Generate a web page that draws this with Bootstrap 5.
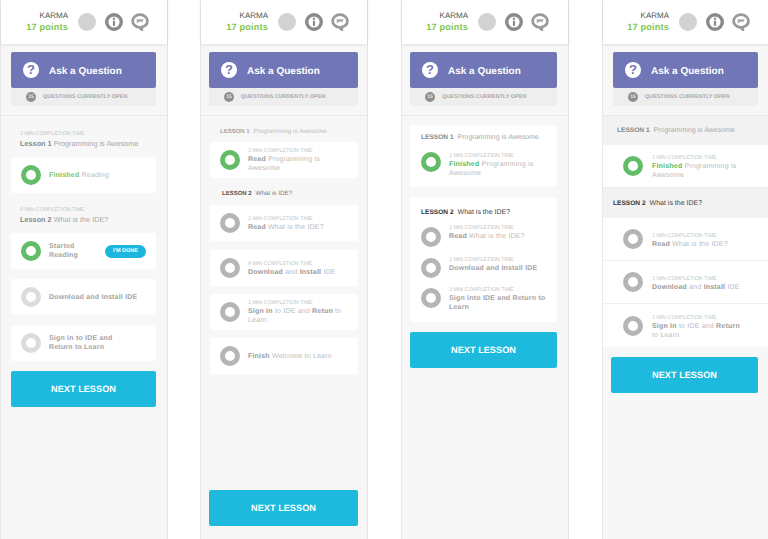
<!DOCTYPE html>
<html lang="en">
<head>
    <meta charset="UTF-8">
    <meta name="viewport" content="width=device-width, initial-scale=1.0">
    <title>Karma lesson screens</title>
    <link href="https://cdn.jsdelivr.net/npm/bootstrap@5.3.3/dist/css/bootstrap.min.css" rel="stylesheet">
    <style>
        body {
            background-color: #fff;
            font-family: "Liberation Sans", Arial, sans-serif;
            text-rendering: geometricPrecision;
            height: 539px;
            overflow: hidden;
        }
        .screens { height: 539px; }
        .phone {
            width: 168px;
            background-color: #f7f7f7;
            border-left: 1px solid #e8e8e8;
            border-right: 1px solid #e4e4e4;
            flex-shrink: 0;
        }
        .phone-2 { margin-left: 32px; }
        .phone-3 { margin-left: 33px; }
        .phone-4 { margin-left: 33px; width: 166px; border-right: 0; }
        .top-bar {
            height: 44px;
            background-color: #fff;
            box-shadow: 0 1px 3px rgba(0,0,0,.1);
            padding-left: 25px;
            position: relative;
        }
        .phone-3 .top-bar, .phone-4 .top-bar { padding-left: 24px; }
        .karma-box { width: 42px; text-align: right; line-height: 1; padding-top: 1px; }
        .karma-label { font-size: 8px; color: #555; margin-bottom: 3px; }
        .karma-points { font-size: 9.2px; font-weight: 700; color: #7ec850; letter-spacing: .15px; white-space: nowrap; }
        .avatar-dot { width: 18px; height: 18px; border-radius: 50%; background-color: #d2d2d2; margin-left: 10px; }
        .top-icon { width: 18px; height: 18px; margin-left: 9px; }
        .top-icon + .top-icon { margin-left: 8px; }
        .ask-area { padding: 8px 11px 10px 10px; height: 72px; border-bottom: 1px solid #e9e9e9; }
        .phone-2 .ask-area { padding-left: 8px; padding-right: 9px; }
        .phone-3 .ask-area { padding-left: 8px; padding-right: 11px; }
        .phone-4 .ask-area { padding-left: 10px; padding-right: 10px; }
        .ask-btn {
            height: 36px;
            background-color: #7076b6;
            border-radius: 2px;
            color: #fff;
            font-size: 10px;
            font-weight: 700;
            padding-left: 12px;
        }
        .ask-label { padding-top: 3px; }
        .ask-mark {
            width: 16px;
            height: 16px;
            border-radius: 50%;
            background-color: #fff;
            color: #7076b6;
            font-size: 13px;
            font-weight: 700;
            line-height: 16px;
            text-align: center;
            margin-right: 10px;
        }
        .open-bar {
            height: 18px;
            background-color: #eeeeee;
            border-radius: 0 0 2px 2px;
            padding-left: 15px;
            font-size: 5.5px;
            font-weight: 700;
            color: #a8a8a8;
        }
        .open-count {
            width: 10px;
            height: 10px;
            border-radius: 50%;
            background-color: #8f8f8f;
            color: #e4e4e4;
            font-size: 5px;
            line-height: 10px;
            text-align: center;
            margin-right: 7px;
        }
        .lesson-card { background-color: #fff; border-radius: 2px; }
        .phone-1 .lesson-card { margin-left: 10px; margin-right: 11px; }
        .phone-2 .lesson-card { margin-left: 9px; margin-right: 9px; }
        .phone-3 .lesson-card { margin-left: 8px; margin-right: 11px; }
        .step-row { display: flex; align-items: center; height: 36px; padding-left: 10px; }
        .ring {
            width: 20px;
            height: 20px;
            border-radius: 50%;
            border: 5px solid #b5b5b5;
            flex-shrink: 0;
            margin-right: 8px;
            background-color: #fff;
        }
        .ring-done { border-color: #63bd68; }
        .ring-idle { border-color: #dcdcdc; }
        .time-line { font-size: 5.3px; color: #c4c4c4; line-height: 8px; white-space: nowrap; }
        .step-text { font-size: 7px; letter-spacing: .2px; color: #bbb; line-height: 9px; white-space: nowrap; }
        .step-text b { color: #9c9c9c; }
        .step-text .ok { color: #7fc465; }
        .step-text .ok-dark { color: #5dbb62; }
        .step-plain { font-weight: 700; color: #a4a4a4; }
        .lesson-small { font-size: 7.3px; color: #a8a8a8; line-height: 10px; white-space: nowrap; }
        .lesson-small b { color: #8a8a8a; }
        .done-pill {
            background-color: #1cb6de;
            color: #fff;
            font-size: 5.5px;
            font-weight: 700;
            border-radius: 7px;
            height: 13px;
            width: 41px;
            line-height: 13px;
            text-align: center;
            margin-left: auto;
            margin-right: 10px;
            flex-shrink: 0;
        }
        .next-btn {
            background-color: #1dbade;
            color: #fff;
            font-size: 9.2px;
            font-weight: 700;
            height: 36px;
            border-radius: 2px;
            padding-top: 2px;
        }
        .phone-1 .next-btn { margin: 10px 11px 0 10px; }
        .phone-2 .next-btn { margin: auto 9px 13px 8px; }
        .phone-3 .next-btn { margin: 10px 11px 0 8px; }
        .phone-4 .next-btn { margin: 10px 10px 0 8px; }
        .phone-1-body { padding-top: 14px; }
        .head-1 { padding-left: 19px; height: 27px; }
        .head-next { margin-top: 13px; }
        .time-gap { margin-bottom: 1px; }
        .gap-10 { margin-top: 10px; }
        .gap-9 { margin-top: 9px; }
        .gap-8 { margin-top: 8px; }
        .phone-2-body { padding-top: 11px; }
        .caps-head { font-size: 6.3px; line-height: 10px; color: #c0c0c0; white-space: nowrap; }
        .caps-head b { font-size: 6px; color: #a5a5a5; margin-right: 2px; }
        .caps-head.now { color: #777; }
        .caps-head.now b { color: #555; }
        .head-a { padding-left: 19px; margin-bottom: 5px; }
        .head-b { padding-left: 21px; margin-top: 11px; margin-bottom: 6px; }
        .phone-3-body { padding-top: 9px; }
        .lesson-head { font-size: 7px; line-height: 10px; color: #aaa; white-space: nowrap; padding-top: 1px; }
        .lesson-head b { font-size: 6.6px; color: #888; margin-right: 2px; }
        .lesson-head.now { color: #444; }
        .lesson-head.now b { color: #333; }
        .card-one { height: 62px; padding: 7px 0 0 11px; }
        .card-two { height: 125px; padding: 10px 0 0 11px; }
        .top-row { display: flex; align-items: flex-start; }
        .top-row .ring { margin-right: 8px; margin-top: 2px; }
        .top-row.first .ring { margin-top: 0; }
        .top-row.first { margin-top: 9px; }
        .row-read { height: 32px; margin-top: 6px; }
        .top-row.row-read .ring { margin-top: 3px; }
        .row-down { height: 30px; }
        .band { background-color: #f2f2f2; display: flex; align-items: center; }
        .band-a { height: 29px; padding-left: 14px; }
        .band-b { height: 30px; padding-left: 10px; }
        .band-row { height: 43px; background-color: #fff; border-bottom: 1px solid #f0f0f0; display: flex; align-items: center; padding-left: 20px; }
        .band-row .ring { margin-right: 9px; }
        .band-copy { padding-top: 2px; }
        .band-row.last { border-bottom: 0; }
    </style>
</head>
<body>
    <div class="screens d-flex">

        <!-- screen 1 -->
        <div class="phone phone-1">
            <div class="top-bar d-flex align-items-center">
                <div class="karma-box"><div class="karma-label">KARMA</div><div class="karma-points">17 points</div></div>
                <div class="avatar-dot"></div>
                <svg class="top-icon" viewBox="0 0 18 18"><use href="#ico-info"/></svg>
                <svg class="top-icon" viewBox="0 0 18 18"><use href="#ico-chat"/></svg>
            </div>
            <div class="ask-area">
                <div class="ask-btn d-flex align-items-center"><span class="ask-mark">?</span><span class="ask-label">Ask a Question</span></div>
                <div class="open-bar d-flex align-items-center"><span class="open-count">15</span>QUESTIONS CURRENTLY OPEN</div>
            </div>
            <div class="phone-1-body">
                <div class="head-1">
                    <div class="time-line time-gap">3 MIN COMPLETION TIME</div>
                    <div class="lesson-small"><b>Lesson 1</b> Programming is Awesome</div>
                </div>
                <div class="lesson-card step-row"><div class="ring ring-done"></div><div class="step-text"><b class="ok">Finished</b> Reading</div></div>
                <div class="head-1 head-next">
                    <div class="time-line time-gap">8 MIN COMPLETION TIME</div>
                    <div class="lesson-small"><b>Lesson 2</b> What is the IDE?</div>
                </div>
                <div class="lesson-card step-row"><div class="ring ring-done"></div><div class="step-text step-plain">Started<br>Reading</div><div class="done-pill">I'M DONE</div></div>
                <div class="lesson-card step-row gap-10"><div class="ring ring-idle"></div><div class="step-text step-plain">Download and Install IDE</div></div>
                <div class="lesson-card step-row gap-10"><div class="ring ring-idle"></div><div class="step-text step-plain">Sign in to IDE and<br>Return to Learn</div></div>
                <div class="next-btn d-flex align-items-center justify-content-center">NEXT LESSON</div>
            </div>
        </div>

        <!-- screen 2 -->
        <div class="phone phone-2 d-flex flex-column">
            <div class="top-bar d-flex align-items-center flex-shrink-0">
                <div class="karma-box"><div class="karma-label">KARMA</div><div class="karma-points">17 points</div></div>
                <div class="avatar-dot"></div>
                <svg class="top-icon" viewBox="0 0 18 18"><use href="#ico-info"/></svg>
                <svg class="top-icon" viewBox="0 0 18 18"><use href="#ico-chat"/></svg>
            </div>
            <div class="ask-area flex-shrink-0">
                <div class="ask-btn d-flex align-items-center"><span class="ask-mark">?</span><span class="ask-label">Ask a Question</span></div>
                <div class="open-bar d-flex align-items-center"><span class="open-count">15</span>QUESTIONS CURRENTLY OPEN</div>
            </div>
            <div class="phone-2-body flex-grow-1 d-flex flex-column">
                <div class="caps-head head-a"><b>LESSON 1</b> Programming is Awesome</div>
                <div class="lesson-card step-row"><div class="ring ring-done"></div><div><div class="time-line">3 MIN COMPLETION TIME</div><div class="step-text"><b>Read</b> Programming is<br>Awesome</div></div></div>
                <div class="caps-head now head-b"><b>LESSON 2</b> What is IDE?</div>
                <div class="lesson-card step-row"><div class="ring"></div><div><div class="time-line">2 MIN COMPLETION TIME</div><div class="step-text"><b>Read</b> What is the IDE?</div></div></div>
                <div class="lesson-card step-row gap-9"><div class="ring"></div><div><div class="time-line">4 MIN COMPLETION TIME</div><div class="step-text"><b>Download</b> and <b>Install</b> IDE</div></div></div>
                <div class="lesson-card step-row gap-8"><div class="ring"></div><div><div class="time-line">1 MIN COMPLETION TIME</div><div class="step-text"><b>Sign In</b> to IDE and <b>Retun</b> to<br>Learn</div></div></div>
                <div class="lesson-card step-row gap-8"><div class="ring"></div><div class="step-text"><b>Finish</b> Welcome to Learn</div></div>
                <div class="next-btn d-flex align-items-center justify-content-center">NEXT LESSON</div>
            </div>
        </div>

        <!-- screen 3 -->
        <div class="phone phone-3">
            <div class="top-bar d-flex align-items-center">
                <div class="karma-box"><div class="karma-label">KARMA</div><div class="karma-points">17 points</div></div>
                <div class="avatar-dot"></div>
                <svg class="top-icon" viewBox="0 0 18 18"><use href="#ico-info"/></svg>
                <svg class="top-icon" viewBox="0 0 18 18"><use href="#ico-chat"/></svg>
            </div>
            <div class="ask-area">
                <div class="ask-btn d-flex align-items-center"><span class="ask-mark">?</span><span class="ask-label">Ask a Question</span></div>
                <div class="open-bar d-flex align-items-center"><span class="open-count">15</span>QUESTIONS CURRENTLY OPEN</div>
            </div>
            <div class="phone-3-body">
                <div class="lesson-card card-one">
                    <div class="lesson-head"><b>LESSON 1</b> Programming is Awesome</div>
                    <div class="top-row first"><div class="ring ring-done"></div><div><div class="time-line">3 MIN COMPLETION TIME</div><div class="step-text"><b class="ok-dark">Finished</b> Programming is<br>Awesome</div></div></div>
                </div>
                <div class="lesson-card card-two gap-10">
                    <div class="lesson-head now"><b>LESSON 2</b> What is the IDE?</div>
                    <div class="top-row row-read"><div class="ring"></div><div><div class="time-line">3 MIN COMPLETION TIME</div><div class="step-text"><b>Read</b> What is the IDE?</div></div></div>
                    <div class="top-row row-down"><div class="ring"></div><div><div class="time-line">3 MIN COMPLETION TIME</div><div class="step-text step-plain">Download and Install IDE</div></div></div>
                    <div class="top-row"><div class="ring"></div><div><div class="time-line">3 MIN COMPLETION TIME</div><div class="step-text step-plain">Sign into IDE and Return to<br>Learn</div></div></div>
                </div>
                <div class="next-btn d-flex align-items-center justify-content-center">NEXT LESSON</div>
            </div>
        </div>

        <!-- screen 4 -->
        <div class="phone phone-4">
            <div class="top-bar d-flex align-items-center">
                <div class="karma-box"><div class="karma-label">KARMA</div><div class="karma-points">17 points</div></div>
                <div class="avatar-dot"></div>
                <svg class="top-icon" viewBox="0 0 18 18"><use href="#ico-info"/></svg>
                <svg class="top-icon" viewBox="0 0 18 18"><use href="#ico-chat"/></svg>
            </div>
            <div class="ask-area">
                <div class="ask-btn d-flex align-items-center"><span class="ask-mark">?</span><span class="ask-label">Ask a Question</span></div>
                <div class="open-bar d-flex align-items-center"><span class="open-count">15</span>QUESTIONS CURRENTLY OPEN</div>
            </div>
            <div class="band band-a"><div class="lesson-head"><b>LESSON 1</b> Programming is Awesome</div></div>
            <div class="band-row"><div class="ring ring-done"></div><div class="band-copy"><div class="time-line">3 MIN COMPLETION TIME</div><div class="step-text"><b class="ok-dark">Finished</b> Programming is<br>Awesome</div></div></div>
            <div class="band band-b"><div class="lesson-head now"><b>LESSON 2</b> What is the IDE?</div></div>
            <div class="band-row"><div class="ring"></div><div class="band-copy"><div class="time-line">3 MIN COMPLETION TIME</div><div class="step-text"><b>Read</b> What is the IDE?</div></div></div>
            <div class="band-row"><div class="ring"></div><div class="band-copy"><div class="time-line">3 MIN COMPLETION TIME</div><div class="step-text"><b>Download</b> and <b>Install</b> IDE</div></div></div>
            <div class="band-row last"><div class="ring"></div><div class="band-copy"><div class="time-line">3 MIN COMPLETION TIME</div><div class="step-text"><b>Sign In</b> to IDE and <b>Return</b><br>to Learn</div></div></div>
            <div class="next-btn d-flex align-items-center justify-content-center">NEXT LESSON</div>
        </div>
    </div>

    <svg width="0" height="0" class="d-block">
        <defs>
            <g id="ico-info">
                <circle cx="9" cy="9" r="7.3" fill="#fff" stroke="#8a8a8a" stroke-width="3.4"/>
                <circle cx="9" cy="5.8" r="1.2" fill="#8a8a8a"/>
                <rect x="7.9" y="7.8" width="2.2" height="5" fill="#8a8a8a"/>
            </g>
            <g id="ico-chat">
                <path d="M9 1.6C5 1.6 1.6 4.4 1.6 8c0 3.4 2.9 6.1 6.6 6.3l2.6 2.3v-2.6c3-.7 5.6-3 5.6-6C16.4 4.4 13 1.6 9 1.6z" fill="#fff" stroke="#9a9a9a" stroke-width="2.8"/>
                <path d="M5.5 6.3h7.2l-1 2.5H8.2L6 10.4z" fill="#a8a8a8"/>
            </g>
        </defs>
    </svg>

    <script src="https://cdn.jsdelivr.net/npm/bootstrap@5.3.3/dist/js/bootstrap.bundle.min.js"></script>
</body>
</html>
